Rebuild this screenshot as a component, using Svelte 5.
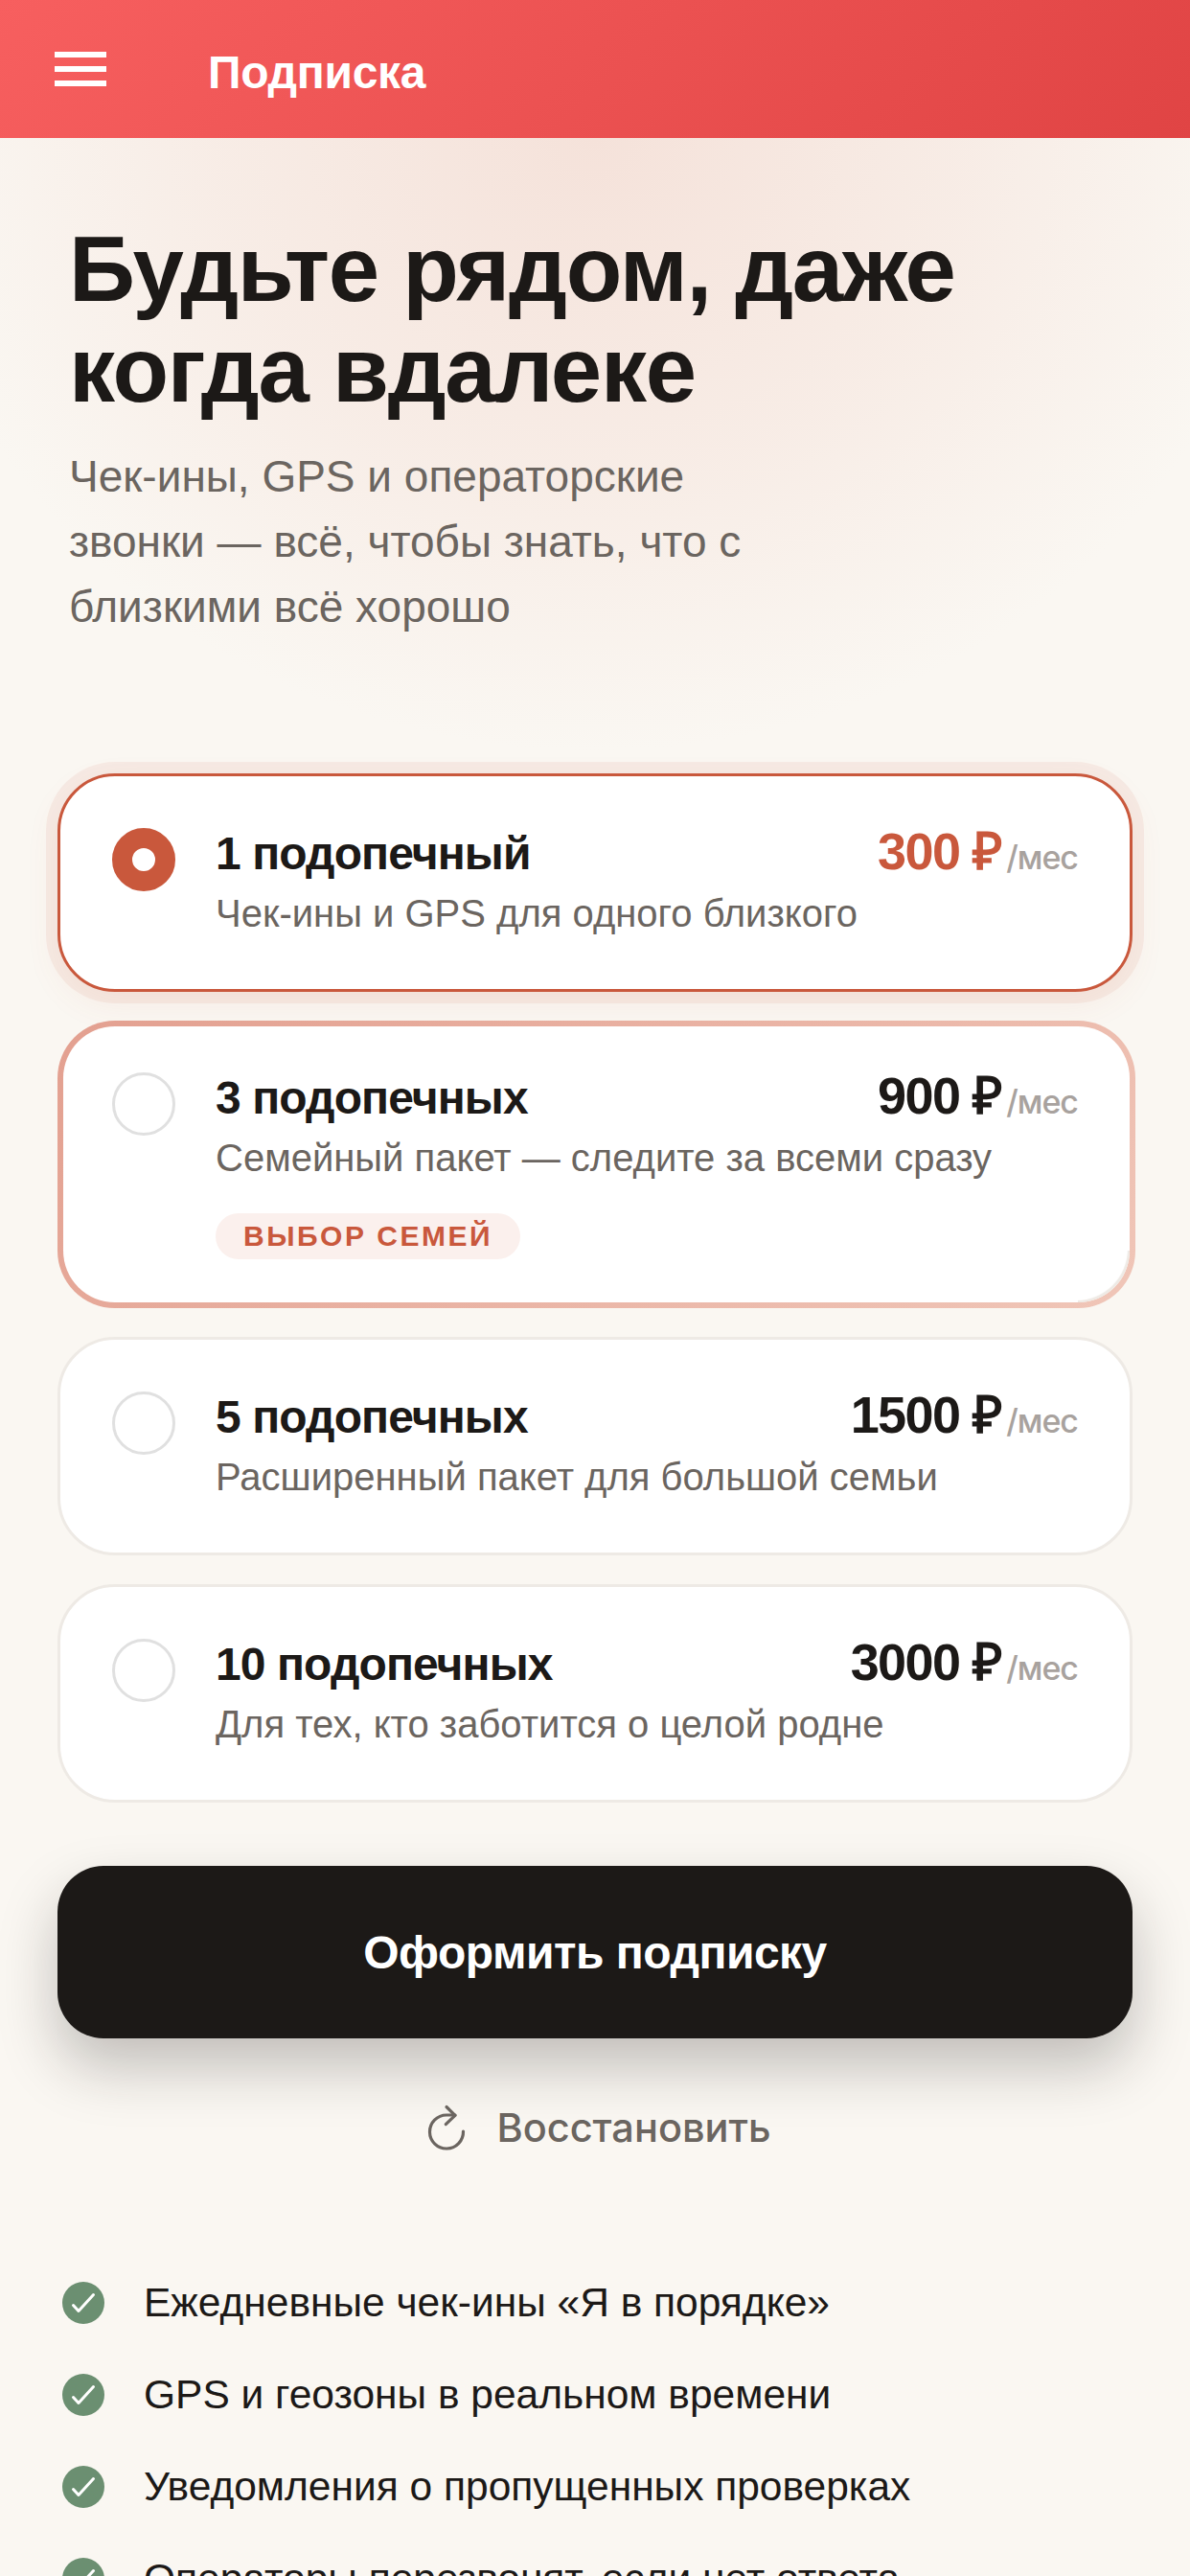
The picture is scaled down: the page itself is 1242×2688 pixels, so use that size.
<script>
  const plans = [
    { id: 1, title: '1 подопечный', price: '300 ₽', desc: 'Чек-ины и GPS для одного близкого', selected: true },
    { id: 3, title: '3 подопечных', price: '900 ₽', desc: 'Семейный пакет — следите за всеми сразу', badge: 'ВЫБОР СЕМЕЙ', popular: true },
    { id: 5, title: '5 подопечных', price: '1500 ₽', desc: 'Расширенный пакет для большой семьи' },
    { id: 10, title: '10 подопечных', price: '3000 ₽', desc: 'Для тех, кто заботится о целой родне' }
  ];
  const features = [
    'Ежедневные чек-ины «Я в порядке»',
    'GPS и геозоны в реальном времени',
    'Уведомления о пропущенных проверках',
    'Операторы перезвонят, если нет ответа'
  ];
</script>

<div class="page">
  <header class="bar">
    <div class="burger"><span></span><span></span><span></span></div>
    <div class="bar-title">Подписка</div>
  </header>

  <main class="content">
    <section class="hero">
      <h1>Будьте рядом, даже<br />когда вдалеке</h1>
      <p>Чек-ины, GPS и операторские<br />звонки — всё, чтобы знать, что с<br />близкими всё хорошо</p>
    </section>

    <section class="plans">
      {#each plans as plan}
        <div class="card" class:selected={plan.selected} class:popular={plan.popular}>
          <div class="radio"></div>
          <div class="body">
            <div class="top">
              <div class="name">{plan.title}</div>
              <div class="price"><b>{plan.price}</b><span>/мес</span></div>
            </div>
            <div class="desc">{plan.desc}</div>
            {#if plan.badge}<div class="badge">{plan.badge}</div>{/if}
          </div>
        </div>
      {/each}
    </section>

    <button class="cta">Оформить подписку</button>

    <div class="restore">
      <svg width="42" height="48" viewBox="0 0 42 48" fill="none" stroke="#6b6560" stroke-width="3.2" stroke-linecap="round" stroke-linejoin="round">
        <path d="M38.500 28A17.500 17.500 0 1 1 21 11h9" />
        <path d="M21 2.500 30 11.300 20.300 20.600" />
      </svg>
      <span>Восстановить</span>
    </div>

    <ul class="features">
      {#each features as f}
        <li>
          <svg width="44" height="44" viewBox="0 0 44 44">
            <circle cx="22" cy="22" r="22" fill="#6b8f71" />
            <path d="M11.500 24.500 17 30.500 32.500 13.500" fill="none" stroke="#fff" stroke-width="3" stroke-linecap="round" stroke-linejoin="round" />
          </svg>
          <span>{f}</span>
        </li>
      {/each}
    </ul>
  </main>
</div>

<style>
  :global(body) {
    margin: 0;
    background: #faf7f2;
  }
  .page {
    width: 1242px;
    height: 2688px;
    overflow: hidden;
    font-family: "Liberation Sans", Arial, sans-serif;
    color: #1c1917;
    background: #faf7f2;
  }
  .bar {
    height: 144px;
    display: flex;
    align-items: center;
    padding-left: 57px;
    box-sizing: border-box;
    background: linear-gradient(135deg, #f75f5f 0%, #e04444 100%);
    color: #fff;
  }
  .burger {
    display: flex;
    flex-direction: column;
    gap: 9px;
    width: 54px;
  }
  .burger span {
    display: block;
    height: 6px;
    background: #fff;
  }
  .bar-title {
    margin-left: 106px;
    margin-top: 6px;
    font-size: 48px;
    font-weight: 700;
    letter-spacing: -0.3px;
  }
  .content {
    background: radial-gradient(ellipse 720px 640px at 620px 0, #f5e2da 0%, rgba(245, 226, 218, 0.5) 55%, rgba(250, 247, 242, 0) 100%);
    padding: 84px 60px 0;
  }
  .hero {
    padding-left: 12px;
  }
  h1 {
    margin: 0;
    font-size: 96px;
    line-height: 105px;
    font-weight: 700;
    letter-spacing: -1.3px;
    color: #1c1917;
  }
  .hero p {
    margin: 25px 0 0;
    font-size: 46px;
    line-height: 68px;
    color: #6b6560;
  }
  .plans {
    margin-top: 140px;
    display: flex;
    flex-direction: column;
    gap: 30px;
  }
  .card {
    position: relative;
    display: flex;
    gap: 42px;
    box-sizing: border-box;
    height: 228px;
    padding: 54px;
    background: #fff;
    border: 3px solid #eeeae5;
    border-radius: 60px;
  }
  .card.selected {
    border-color: #c9583c;
    box-shadow: 0 0 0 12px rgba(201, 88, 60, 0.08), 0 12px 36px rgba(201, 88, 60, 0.08);
  }
  .card.popular {
    height: 300px;
    margin-right: -3px;
    border: 6px solid transparent;
    padding: 48px 54px 46px 51px;
    background:
      linear-gradient(#fff, #fff) padding-box,
      linear-gradient(135deg, #e3a090, #f0c6b8) border-box;
  }
  .card.popular::after {
    content: "";
    position: absolute;
    right: 0;
    bottom: 0;
    width: 54px;
    height: 54px;
    border-radius: 0 0 54px 0;
    box-shadow: inset -2px -2px 1px #eeeae5;
  }
  .radio {
    width: 66px;
    height: 66px;
    flex: none;
    box-sizing: border-box;
    border-radius: 50%;
    border: 3px solid #e0e0e0;
  }
  .selected .radio {
    border: 21px solid #c9583c;
    background: #fff;
  }
  .body {
    flex: 1;
    min-width: 0;
  }
  .top {
    display: flex;
    justify-content: space-between;
    align-items: baseline;
    height: 60px;
    margin-top: -6px;
  }
  .name {
    font-size: 48px;
    line-height: 60px;
    font-weight: 700;
    letter-spacing: -0.9px;
  }
  .price {
    line-height: 60px;
  }
  .price b {
    font-size: 54px;
    font-weight: 700;
    letter-spacing: -1.6px;
  }
  .selected .price b {
    color: #c9583c;
  }
  .price span {
    margin-left: 6px;
    font-family: Inter, "Liberation Sans", sans-serif;
    font-size: 34px;
    font-weight: 500;
    letter-spacing: -1px;
    color: #a8a29e;
  }
  .desc {
    margin-top: 8px;
    font-size: 40px;
    line-height: 54px;
    color: #6b6560;
  }
  .badge {
    display: inline-block;
    margin-top: 31px;
    padding: 0 29px;
    height: 48px;
    line-height: 48px;
    border-radius: 24px;
    background: #fbf0ed;
    color: #c9583c;
    font-size: 30px;
    font-weight: 700;
    letter-spacing: 2.5px;
  }
  .cta {
    display: block;
    width: 100%;
    height: 180px;
    margin-top: 66px;
    border: 0;
    border-radius: 48px;
    background: #1c1917;
    color: #fff;
    font-family: inherit;
    font-size: 48px;
    font-weight: 700;
    letter-spacing: -0.5px;
    box-shadow: 0 30px 60px rgba(28, 25, 23, 0.25);
  }
  .restore {
    margin-top: 66px;
    padding-left: 8px;
    display: flex;
    align-items: center;
    justify-content: center;
    gap: 31px;
    font-family: Inter, "Liberation Sans", sans-serif;
    font-size: 41.5px;
    font-weight: 500;
    color: #6b6560;
    height: 54px;
  }
  .features {
    list-style: none;
    margin: 0;
    padding: 0 0 0 5px;
    margin-top: 129px;
    display: flex;
    flex-direction: column;
    gap: 42px;
  }
  .features li {
    display: flex;
    align-items: center;
    gap: 41px;
    height: 54px;
    font-size: 42.5px;
    color: #1c1917;
  }
  .features svg {
    flex: none;
  }
</style>
